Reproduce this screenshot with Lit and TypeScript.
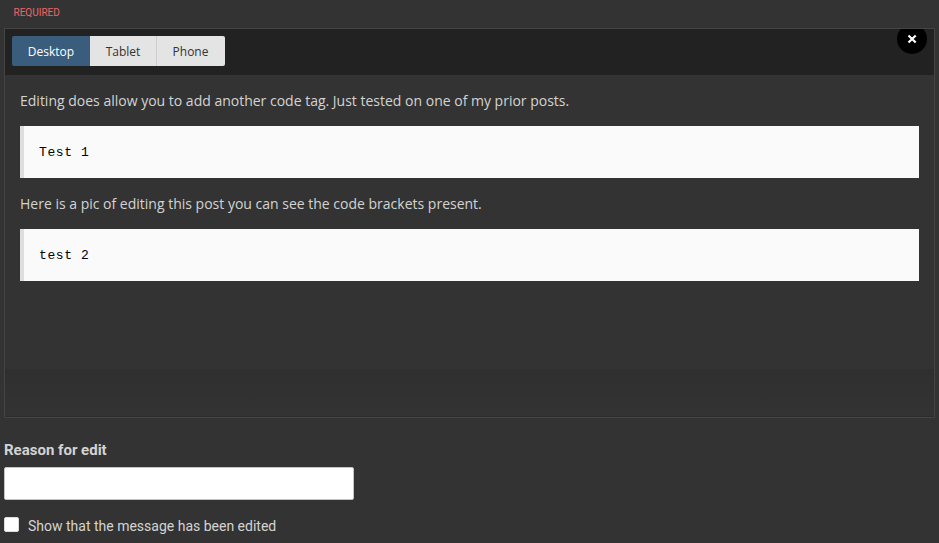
import { LitElement, html, css } from "lit";
import { customElement, state } from "lit/decorators.js";

@customElement("app-root")
export class AppRoot extends LitElement {
  static styles = css`
    :host {
      display: block;
      height: 543px;
      overflow: hidden;
      background: #333;
      color: #d3d3d3;
      font-family: Roboto, sans-serif;
    }
    * { box-sizing: border-box; }
    .required {
      height: 28px;
      padding: 6px 0 0 13.5px;
      font-size: 10px;
      line-height: 14px;
      color: #ee6565;
    }
    .preview {
      position: relative;
      display: flex;
      flex-direction: column;
      width: 931px;
      height: 390px;
      margin-left: 4px;
      border: 1px solid #444;
      overflow: hidden;
      font-family: "Open Sans", sans-serif;
    }
    .toolbar {
      height: 46px;
      flex: none;
      padding: 7px;
      background: #222;
    }
    .tabs {
      display: inline-flex;
      height: 30px;
      border-radius: 2px;
      overflow: hidden;
    }
    .tab {
      border: 0;
      padding: 1px 0 0;
      width: 78px;
      background: #e4e4e4;
      color: #333;
      font: 12px/29px "Open Sans", sans-serif;
    }
    .tab + .tab { width: 66px; }
    .tab + .tab + .tab { width: 69px; border-left: 1px solid #cecece; padding-right: 1px; }
    .tab.active { background: #3a5d7d; color: #fff; }
    .close {
      position: absolute;
      top: -5px;
      right: 7px;
      width: 30px;
      height: 30px;
      padding: 0;
      border: 0;
      border-radius: 50%;
      background: #000;
      display: flex;
      align-items: center;
      justify-content: center;
    }
    .content {
      flex: 1;
      padding: 15px;
      font-size: 14px;
    }
    p { margin: 0; line-height: 21px; }
    pre {
      height: 52px;
      margin: 15px 0;
      padding: 16px 15px 14px;
      border-left: 4px solid #dedede;
      background: #fafafa;
      color: #000;
      font: 13px/22px "Liberation Mono", monospace;
      letter-spacing: 0.6px;
    }
    .footer {
      flex: none;
      height: 48px;
      background: linear-gradient(#2f2f2f, #333);
      border-bottom: 1px solid #2d2d2d;
    }
    .form { padding: 22px 0 0 4px; }
    .label {
      display: block;
      font-size: 15px;
      font-weight: 700;
      line-height: 20px;
    }
    .reason {
      display: block;
      width: 350px;
      height: 33px;
      margin-top: 7px;
      border: 1px solid #c4c4c4;
      border-radius: 2px;
      background: #fff;
    }
    .check {
      display: flex;
      align-items: center;
      margin-top: 16px;
      height: 20px;
      font-size: 14px;
    }
    .box {
      appearance: none;
      width: 15px;
      height: 15px;
      margin: 0 9px 3px 0;
      border: 1px solid #ddd;
      border-radius: 2px;
      background: #fff;
    }
    .box:checked { background: #3a5d7d; }
  `;

  @state() private device = "Desktop";

  render() {
    return html`
      <div class="required">REQUIRED</div>
      <section class="preview">
        <div class="toolbar">
          <div class="tabs">
            ${["Desktop", "Tablet", "Phone"].map(
              (name) => html`<button
                class="tab ${this.device === name ? "active" : ""}"
                @click=${() => (this.device = name)}
              >${name}</button>`
            )}
          </div>
          <button class="close" aria-label="Close">
            <svg width="10" height="10" viewBox="0 0 10 10" fill="none" stroke="#fff" stroke-width="2.2">
              <path d="M1.5 1.5 8.7 8.5M8.7 1.5 1.5 8.5" />
            </svg>
          </button>
        </div>
        <div class="content">
          <p>Editing does allow you to add another code tag. Just tested on one of my prior posts.</p>
          <pre>Test 1</pre>
          <p>Here is a pic of editing this post you can see the code brackets present.</p>
          <pre>test 2</pre>
        </div>
        <div class="footer"></div>
      </section>
      <div class="form">
        <label class="label" for="reason">Reason for edit</label>
        <input class="reason" id="reason" type="text" />
        <label class="check"><input class="box" type="checkbox" />Show that the message has been edited</label>
      </div>
    `;
  }
}
